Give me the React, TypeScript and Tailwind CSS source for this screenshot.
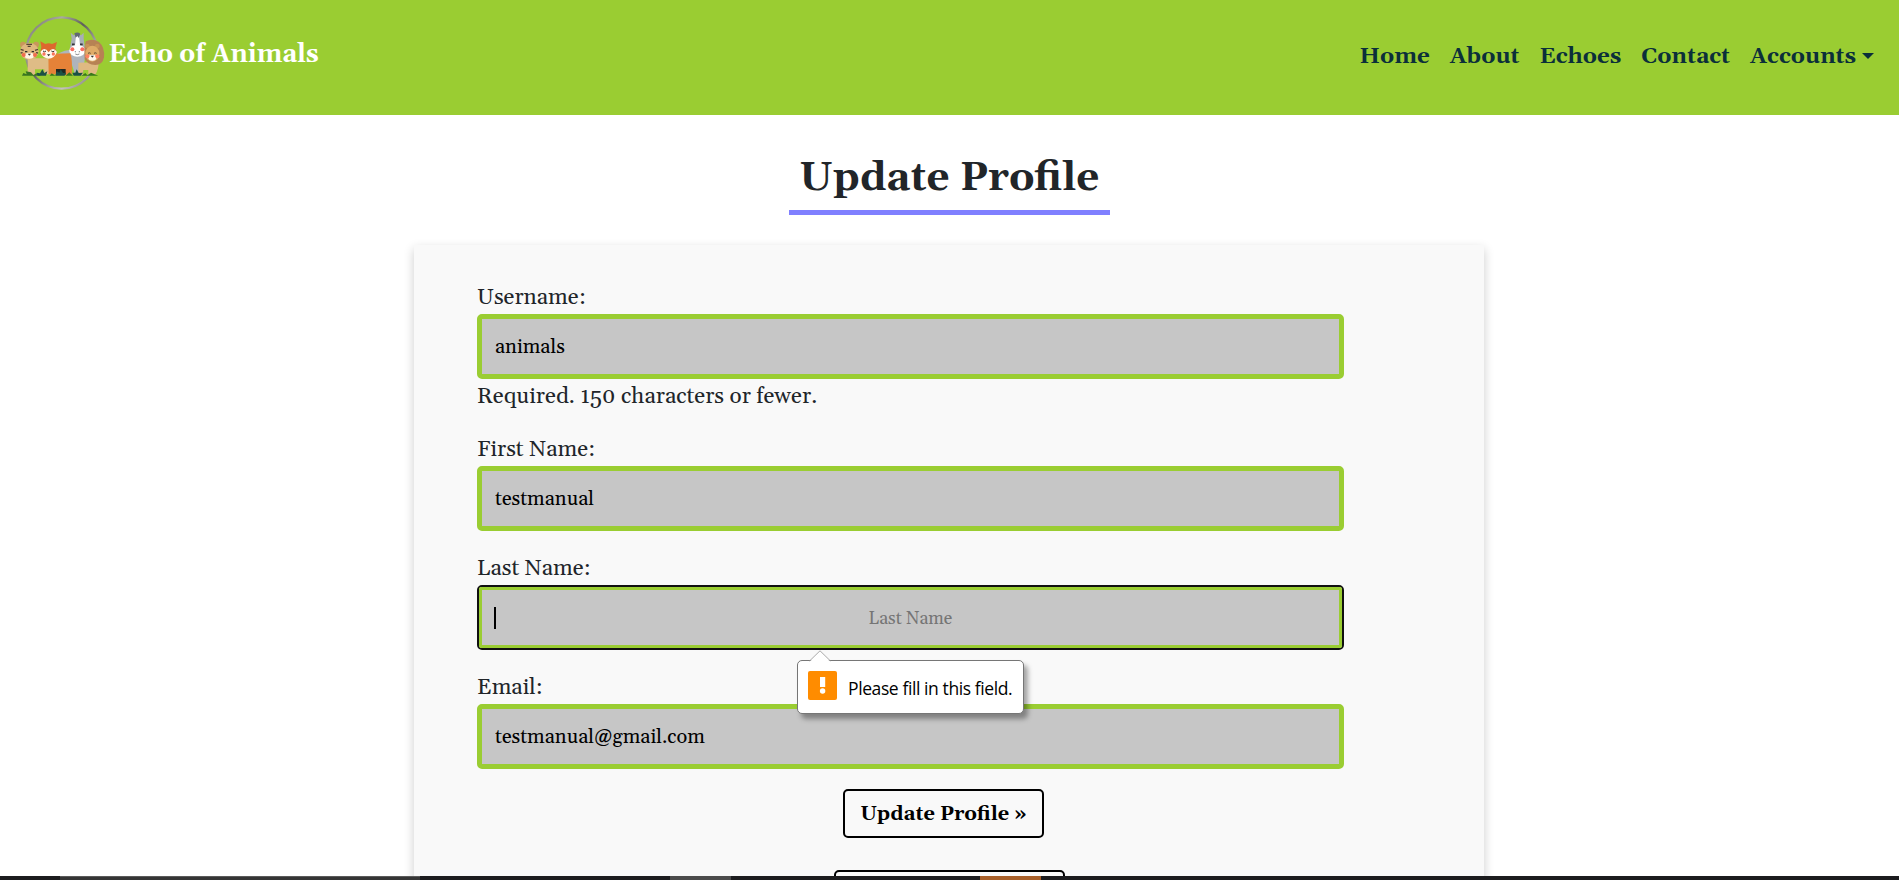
import type { ReactNode } from "react";

const navItems = ["Home", "About", "Echoes", "Contact"];

function Logo() {
  return (
    <svg className="h-[85px] w-[95px] shrink-0" viewBox="0 0 285 255" aria-hidden="true">
      <defs>
        <linearGradient id="ring" x1="0" y1="0" x2="1" y2="1">
          <stop offset="0" stopColor="#66665c" />
          <stop offset="0.25" stopColor="#a9a9a2" />
          <stop offset="0.45" stopColor="#5d5f58" />
          <stop offset="0.75" stopColor="#c4c2bf" />
          <stop offset="1" stopColor="#66645f" />
        </linearGradient>
      </defs>
      <circle cx="140" cy="129" r="107" fill="none" stroke="url(#ring)" strokeWidth="7" />
      {/* horse */}
      <path d="M128 132 Q148 118 180 119 L212 127 L203 196 H181 L166 150Z" fill="#aeb4bd" />
      <path d="M167 68 L176 76 Q187 68 198 76 L206 68 L206 86 L210 116 Q205 138 187 138 Q166 136 164 116 L170 86Z" fill="#a8aeb7" />
      <path d="M183 78 H192 L195 106 H180Z" fill="#fff" />
      <path d="M178 70 Q188 64 196 71 L191 84 L187 78 L182 83Z" fill="#606775" />
      <ellipse cx="187" cy="122" rx="24" ry="18" fill="#fff" />
      <circle cx="172" cy="118" r="6" fill="#fa6c60" /><circle cx="202" cy="118" r="6" fill="#fa6c60" />
      <path d="M171 103 h8 M195 103 h8" stroke="#34343b" strokeWidth="5" />
      <path d="M181 123 v4 M193 123 v4 M181 132 q6 4 12 0" stroke="#4e5055" strokeWidth="2" fill="none" />
      {/* tiger */}
      <path d="M38 145 H107 V193 H88 V178 H60 V195 H38Z" fill="#dfbc86" />
      <circle cx="24" cy="104" r="9" fill="#c9965c" /><circle cx="63" cy="104" r="9" fill="#c9965c" />
      <ellipse cx="43" cy="124" rx="28" ry="25" fill="#dfb77e" />
      <path d="M34 103 h17 M38 109 h9 M17 118 l9 3 M17 129 l6-1 M69 118 l-9 3 M69 129 l-6-1" stroke="#554535" strokeWidth="4" />
      <ellipse cx="43" cy="137" rx="14" ry="9" fill="#fff5e4" />
      <circle cx="26" cy="135" r="6" fill="#f16c4d" /><circle cx="60" cy="135" r="6" fill="#f16c4d" />
      <path d="M30 125 h7 M50 125 h7" stroke="#302b29" strokeWidth="4" />
      <path d="M38 131 h10 l-5 6Z" fill="#39302c" />
      {/* fox */}
      <path d="M100 132 L166 130 Q173 148 170 195 H148 V177 H124 V193 H101Z" fill="#e58238" />
      <path d="M123 177 h29 v17 h-10 l-4-9 -4 9 h-11Z" fill="#202821" />
      <path d="M79 110 L76 94 L91 102 Q101 98 111 102 L126 96 L121 114 L125 128 Q118 145 101 145 Q83 143 76 129Z" fill="#dd682e" />
      <path d="M76 126 Q88 108 101 127 Q114 108 126 126 Q118 146 101 146 Q83 145 76 126Z" fill="#fff8ed" />
      <path d="M84 123 q5 5 9 0 M109 123 q5 5 9 0" stroke="#352e2c" strokeWidth="3" fill="none" />
      <circle cx="87" cy="132" r="5" fill="#fa755d" /><circle cx="115" cy="132" r="5" fill="#fa755d" />
      <path d="M96 133 h10 l-5 6Z" fill="#2d2929" />
      {/* lion */}
      <path d="M190 158 L250 156 Q253 175 240 195 H220 V180 H204 V195 H190Z" fill="#dfb982" />
      <path d="M212 94 Q232 84 252 96 Q270 112 267 142 Q263 165 241 165 Q216 164 209 147 L208 118Z" fill="#b78254" />
      <circle cx="217" cy="108" r="7" fill="#c69255" /><circle cx="247" cy="108" r="7" fill="#c69255" />
      <ellipse cx="232" cy="131" rx="21" ry="24" fill="#dfac68" />
      <ellipse cx="232" cy="143" rx="12" ry="9" fill="#fff8eb" />
      <circle cx="217" cy="139" r="6" fill="#ff8161" /><circle cx="247" cy="139" r="6" fill="#ff8161" />
      <path d="M219 130 q4-3 8 0 M237 130 q4-3 8 0" stroke="#594332" strokeWidth="3" fill="none" />
      <path d="M227 137 h10 l-5 6Z" fill="#302f2f" />
      {/* grass */}
      <path d="M21 197 L25 189 L35 193 L32 184 L48 187 L55 195 L65 190 L78 197Z" fill="#387421" />
      <path d="M68 197 L65 188 L75 190 L82 178 L88 189 L97 184 L93 197Z M121 197 L125 184 L133 188 L137 178 L144 189 L153 188 L149 197Z M176 197 L172 188 L181 188 L185 178 L191 189 L204 188 L197 197Z" fill="#1c5145" />
      <path d="M104 197 L110 190 L121 197 M152 197 L163 187 L174 197 M199 197 L211 189 L217 196 L228 188 L250 197Z" fill="#39791b" />
    </svg>
  );
}

type FieldProps = {
  label: string;
  value?: string;
  placeholder?: string;
  focused?: boolean;
  children?: ReactNode;
};

function Field({ label, value, placeholder, focused, children }: FieldProps) {
  return (
    <div className="relative flex flex-col">
      <label className="h-[34px] pt-px text-[22.4px] leading-[34px]">{label}</label>
      <div className={focused ? "h-[65px] rounded-[5px] border-2 border-[#101010]" : "h-[65px]"}>
        <input
          className={
            focused
              ? "block h-full w-full rounded-[2px] border-3 border-[#9acd32] bg-[#c6c6c6] px-[13px] pt-[3px] text-[17.6px] text-black outline-none placeholder:text-center placeholder:text-[#757575] placeholder:opacity-100"
              : "block h-full w-full rounded-[5px] border-5 border-[#9acd32] bg-[#c6c6c6] px-[13px] pt-px text-[20px] text-black outline-none"
          }
          defaultValue={value}
          placeholder={placeholder}
        />
      </div>
      {children}
    </div>
  );
}

function ValidationBubble() {
  return (
    <div className="absolute top-[109px] left-[320px] z-10 flex h-[54px] w-[227px] items-center rounded-[5px] border border-[#767676] bg-white pl-[10px] shadow-[4px_5px_5px_rgba(0,0,0,0.35)]">
      <svg className="absolute -top-[11px] left-[11px] h-[12px] w-[22px]" viewBox="0 0 22 12">
        <path d="M0.5 12 L11 1 L21.5 12Z" fill="#fff" />
        <path d="M0.5 11 L11 0.8 L21.5 11" fill="none" stroke="#aaa" />
      </svg>
      <svg className="mb-[3px] h-[29px] w-[29px] shrink-0" viewBox="0 0 29 29">
        <rect width="29" height="29" rx="2" fill="#ff8c00" />
        <rect x="12" y="6" width="5.2" height="10" fill="#fff" />
        <circle cx="14.6" cy="20" r="2.7" fill="#fff" />
      </svg>
      <span className="mt-[2px] ml-[11px] whitespace-nowrap font-['Open_Sans','Noto_Sans',sans-serif] text-[17.5px] tracking-[-0.4px] text-black">
        Please fill in this field.
      </span>
    </div>
  );
}

export default function App() {
  return (
    <div className="flex h-[880px] flex-col overflow-hidden bg-white font-[Gelasio,Georgia,'Liberation_Serif',serif] text-[#212529]">
      <header className="flex h-[115px] shrink-0 items-start justify-between bg-[#9acd32] pt-[10px] pr-[25px] pl-[15px]">
        <a className="flex items-start text-white">
          <Logo />
          <span className="-ml-[1.5px] pt-[26px] text-[25.1px] leading-[38px] font-bold whitespace-nowrap">
            Echo of Animals
          </span>
        </a>
        <nav className="flex gap-[20px] pt-[30px] text-[22.4px] leading-[34px] font-bold text-[#0b2f3a]">
          {navItems.map((label) => (
            <a key={label}>{label}</a>
          ))}
          <a className="flex items-start">
            Accounts
            <svg className="mt-[12.5px] ml-[6px] h-[6px] w-[12px]" viewBox="0 0 12 6">
              <path d="M0 0H12L6 6Z" fill="currentColor" />
            </svg>
          </a>
        </nav>
      </header>

      <main className="flex min-h-0 flex-1 flex-col items-center overflow-hidden">
        <h1 className="mt-[33px] h-[67px] w-[321px] shrink-0 border-b-5 border-[#8080ff] pt-[3px] text-center text-[40.3px] leading-[56px] font-bold">
          Update Profile
        </h1>
        <form className="mt-[29.5px] mr-px h-[700px] w-[1070px] shrink-0 bg-[#f9f9f9] px-[63px] pt-[35.5px] shadow-[0_4px_10px_rgba(0,0,0,0.2)]">
          <div className="flex w-[867px] flex-col">
            <Field label="Username:" value="animals">
              <p className="h-[34px] pt-px text-[22.5px] leading-[34px]">Required. 150 characters or fewer.</p>
            </Field>
            <div className="mt-[19px]">
              <Field label="First Name:" value="testmanual" />
            </div>
            <div className="mt-5">
              <Field label="Last Name:" placeholder="Last Name" focused>
                <span className="absolute top-[56px] left-[17px] h-[22px] w-[2px] bg-black" />
                <ValidationBubble />
              </Field>
            </div>
            <div className="mt-5">
              <Field label="Email:" value="testmanual@gmail.com" />
            </div>
          </div>
          <div className="mt-5 flex flex-col items-center gap-[32px]">
            <button className="mr-[11px] h-[49px] w-[201px] rounded-[5px] border-2 border-black text-[20px] font-bold text-black">
              Update Profile »
            </button>
            <button className="mr-[-1px] h-[49px] w-[231px] rounded-[5px] border-2 border-black" />
          </div>
        </form>
      </main>

      <footer className="flex h-[4px] shrink-0 bg-[#1c1c1e]">
        <span className="ml-[60px] w-[360px] border-t border-[#5a5a5a] bg-[#353535]" />
        <span className="ml-[250px] w-[61px] bg-[#4b4b4b]" />
        <span className="ml-[249px] w-[61px] bg-[#a85f28]" />
      </footer>
    </div>
  );
}
